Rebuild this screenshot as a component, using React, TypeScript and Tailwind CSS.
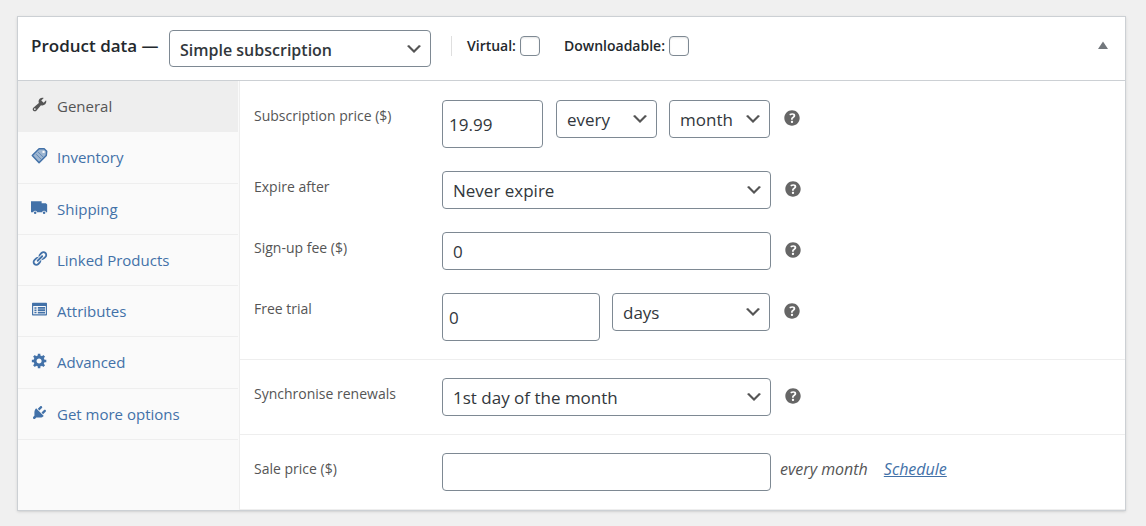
import React, { ReactNode } from "react";

const LABEL = "w-[188px] shrink-0 pt-[6px] text-sm leading-5 text-[#555]";
const FIELD = "rounded border border-[#7e8993] bg-white leading-6 text-[#32373c]";

function Glyph({ d, size }: { d: string; size: string }) {
  return (
    <svg viewBox="0 0 20 20" className={size} fill="currentColor" fillRule="evenodd" aria-hidden="true">
      <path d={d} />
    </svg>
  );
}

const WRENCH =
  "M16.68 9.77c-1.34 1.34-3.3 1.67-4.95.99l-5.41 6.52c-.99.99-2.59.99-3.58 0s-.99-2.59 0-3.57l6.52-5.42c-.68-1.65-.35-3.61.99-4.95 1.28-1.28 3.12-1.62 4.72-1.06l-2.89 2.89 2.82 2.82 2.86-2.87c.53 1.58.18 3.39-1.08 4.65zM3.81 16.21c.4.39 1.04.39 1.43 0 .4-.4.4-1.04 0-1.43-.39-.4-1.03-.4-1.43 0-.39.39-.39 1.03 0 1.43z";
const TRUCK =
  "M0 2.500h12.500v2.500h5l1.500 1.500v9h-1.300a2.400 2.400 0 0 0-4.600 0H7.200a2.400 2.400 0 0 0-4.600 0H0zM4.900 14.700a1.500 1.500 0 1 1 0 3a1.500 1.500 0 0 1 0-3zM15.400 14.700a1.500 1.500 0 1 1 0 3a1.500 1.500 0 0 1 0-3z";
const LINK =
  "M17.74 2.76c1.68 1.69 1.68 4.41 0 6.1l-1.53 1.52c-1.12 1.12-2.7 1.47-4.14 1.09l2.62-2.61.76-.77.76-.76c.84-.84.84-2.2 0-3.04-.84-.85-2.2-.85-3.04 0l-.77.76-3.38 3.38c-.37-1.44-.02-3.02 1.1-4.14l1.52-1.53c1.69-1.68 4.42-1.68 6.1 0zM8.59 13.43l5.34-5.34c.42-.42.42-1.1 0-1.52-.44-.43-1.13-.39-1.53 0l-5.33 5.34c-.42.42-.42 1.1 0 1.52.44.43 1.13.39 1.52 0zm-.76 2.29l4.14-4.15c.38 1.44.03 3.02-1.09 4.14l-1.52 1.53c-1.69 1.68-4.41 1.68-6.1 0-1.68-1.68-1.68-4.42 0-6.1l1.53-1.52c1.12-1.12 2.7-1.47 4.14-1.1l-4.14 4.15c-.85.84-.85 2.2 0 3.05.84.84 2.2.84 3.04 0z";
const LIST =
  "M2 2h16c.5 0 .8.3.8.8v13.400c0 .5-.3.8-.8.8H2c-.5 0-.8-.3-.8-.8V2.800c0-.5.3-.8.8-.8zM2.600 6v9.600h14.800V6zM4 7.300h2.500v1.800H4zM8 7.100h8.500v2.100H8zM4 10h2.500v1.800H4zM8 9.800h8.500v2.100H8zM4 12.700h2.500v1.800H4zM8 12.500h8.500v2.100H8z";
const GEAR =
  "M18 12h-2.18c-.17.7-.44 1.35-.81 1.93l1.54 1.54-2.1 2.1-1.54-1.54c-.58.36-1.23.63-1.91.79V19H8v-2.18c-.68-.16-1.33-.43-1.91-.79l-1.54 1.54-2.12-2.12 1.54-1.54c-.36-.58-.63-1.23-.79-1.91H1V9.03h2.17c.16-.7.44-1.35.8-1.94L2.43 5.55l2.1-2.1 1.54 1.54c.58-.37 1.24-.64 1.93-.81V2h3v2.18c.68.16 1.33.43 1.91.79l1.54-1.54 2.12 2.12-1.54 1.54c.36.59.64 1.24.8 1.94H18V12zm-8.5 1.5c1.66 0 3-1.34 3-3s-1.34-3-3-3-3 1.34-3 3 1.34 3 3 3z";
const PLUG =
  "M13.11 4.36L9.87 7.6 8 5.73l3.24-3.24c.35-.34 1.05-.2 1.56.32.52.51.66 1.21.31 1.55zm-8 1.77l.91-1.12 9.01 9.01-1.19.84c-.71.71-2.63 1.16-3.82 1.16H6.14L4.9 17.26c-.59.59-1.54.59-2.12 0-.59-.58-.59-1.53 0-2.12l1.24-1.24v-3.88c0-1.13.4-3.19 1.09-3.89zm7.26 3.97l3.24-3.24c.34-.35 1.04-.21 1.55.31.52.51.66 1.21.31 1.55l-3.24 3.25z";
const HELP =
  "M17 10c0-3.87-3.14-7-7-7-3.87 0-7 3.13-7 7s3.13 7 7 7c3.86 0 7-3.13 7-7zm-6.3 1.48H9.14v-.43c0-.38.08-.7.24-.98s.46-.57.88-.89c.41-.29.68-.53.81-.71.14-.18.2-.39.2-.62 0-.25-.09-.44-.28-.58-.19-.13-.45-.19-.79-.19-.58 0-1.25.19-2 .57l-.64-1.28c.87-.49 1.8-.74 2.77-.74.81 0 1.45.2 1.92.58.48.39.71.91.71 1.55 0 .43-.09.8-.29 1.11-.19.32-.57.67-1.11 1.06-.38.28-.61.49-.71.63-.1.15-.15.34-.15.57v.35zm-1.47 2.74c-.18-.17-.27-.42-.27-.73 0-.33.08-.58.26-.75s.43-.25.77-.25c.32 0 .57.09.75.26s.27.42.27.74c0 .3-.09.55-.27.72-.18.18-.43.27-.75.27-.33 0-.58-.09-.76-.26z";

function TagIcon() {
  return (
    <svg viewBox="0 0 20 20" className="size-[17px]" fill="none" stroke="currentColor" aria-hidden="true">
      <path d="M1.500 10L9.500 2H15.500L18.500 5L18 10L9.500 18.500Z" strokeWidth="1.700" strokeLinejoin="round" fill="currentColor" fillOpacity="0.5" />
      <path d="M13.500 4.500h2.500v2.500h-2.500z" fill="#fafafa" stroke="none" />
      <path d="M6 8.500l6 6M8.500 6l6 6" strokeWidth="0.800" />
    </svg>
  );
}

const TABS: { name: string; icon: ReactNode; active?: boolean }[] = [
  { name: "General", icon: <Glyph d={WRENCH} size="size-[17px]" />, active: true },
  { name: "Inventory", icon: <TagIcon /> },
  { name: "Shipping", icon: <Glyph d={TRUCK} size="size-[17px]" /> },
  { name: "Linked Products", icon: <Glyph d={LINK} size="size-[17px]" /> },
  { name: "Attributes", icon: <Glyph d={LIST} size="size-[17px]" /> },
  { name: "Advanced", icon: <Glyph d={GEAR} size="size-[17px]" /> },
  { name: "Get more options", icon: <Glyph d={PLUG} size="size-[17px]" /> },
];

function Select({
  id,
  label,
  width,
  options,
  strong,
}: {
  id: string;
  label?: string;
  width: string;
  options: string[];
  strong?: boolean;
}) {
  return (
    <div className={`grid shrink-0 items-center ${width} ${strong ? "h-[37px]" : "h-[38px]"}`}>
      <select
        id={id}
        aria-label={label}
        className={`${FIELD} col-start-1 row-start-1 h-full w-full appearance-none pt-[2px] pr-7 pl-[10px] ${
          strong ? "text-base font-semibold" : "text-[17px]"
        }`}
      >
        {options.map((o) => (
          <option key={o}>{o}</option>
        ))}
      </select>
      <svg
        viewBox="0 0 20 20"
        className="pointer-events-none col-start-1 row-start-1 mr-[7px] size-5 justify-self-end"
        fill="#555"
        aria-hidden="true"
      >
        <path d="M5 6l5 5 5-5 2 1-7 7-7-7 2-1z" />
      </svg>
    </div>
  );
}

function Help() {
  return (
    <button type="button" aria-label="Help" className="ml-[11px] mt-[7px] shrink-0 text-[#666]">
      <Glyph d={HELP} size="size-[22px]" />
    </button>
  );
}

function Check({ label, className }: { label: string; className: string }) {
  return (
    <label className={`flex items-center gap-1 pb-[5px] text-sm font-semibold ${className}`}>
      {label}
      <input
        type="checkbox"
        className="size-5 appearance-none rounded border border-[#7e8993] bg-white shadow-[inset_0_1px_2px_rgba(0,0,0,0.1)]"
      />
    </label>
  );
}

function Row({ id, label, children }: { id: string; label: string; children: ReactNode }) {
  return (
    <div className="flex items-start">
      <label htmlFor={id} className={LABEL}>
        {label}
      </label>
      {children}
    </div>
  );
}

export default function App() {
  return (
    <div className="min-h-screen bg-[#f0f0f0] py-4 pr-5 pl-[17px] font-['Open_Sans','Noto_Sans',sans-serif]">
      <section className="border border-[#ccd0d4] bg-white shadow-sm">
        <header className="flex h-16 items-center border-b border-[#ccd0d4] pl-[13px] pr-4 text-[#23282d]">
          <h2 className="w-[138px] shrink-0 pb-[5px] text-[17px] font-semibold leading-6">Product data —</h2>
          <Select
            id="type"
            label="Product type"
            width="w-[262px]"
            options={["Simple subscription", "Simple product", "Variable subscription"]}
            strong
          />
          <div className="ml-5 pb-[5px]">
            <div className="h-5 w-px bg-[#dfdfdf]" />
          </div>
          <Check label="Virtual:" className="ml-[15px]" />
          <Check label="Downloadable:" className="ml-6" />
          <button type="button" aria-label="Toggle panel" className="ml-auto px-px pb-[7px] text-[#72777c]">
            <svg viewBox="0 0 10 8" className="h-2 w-[10px]" fill="currentColor" aria-hidden="true">
              <path d="M5 0.500L10 8H0z" />
            </svg>
          </button>
        </header>

        <div className="flex">
          <nav className="w-[222px] shrink-0 border-r border-[#eee] bg-[#fafafa] pr-px">
            <ul className="grid h-[359px] auto-rows-fr">
              {TABS.map((t) => (
                <li key={t.name}>
                  <a
                    href={`#${t.name.toLowerCase().replace(/ /g, "-")}`}
                    className={`flex h-full gap-[9px] border-b border-[#eee] pt-[15px] pl-[13px] text-[15px] leading-5 ${
                      t.active ? "bg-[#eee] text-[#555]" : "text-[#4271a8]"
                    }`}
                  >
                    {t.icon}
                    {t.name}
                  </a>
                </li>
              ))}
            </ul>
          </nav>

          <form className="min-w-0 grow">
            <div className="flex flex-col gap-[23px] border-b border-[#eee] pt-[19px] pb-[18px] pl-[14px]">
              <Row id="price" label="Subscription price ($)">
                <input id="price" defaultValue="19.99" className={`${FIELD} h-12 w-[101px] px-[6px] text-[17px]`} />
                <div className="ml-[13px] flex gap-3">
                  <Select id="interval" label="Billing interval" width="w-[101px]" options={["every", "every 2nd"]} />
                  <Select id="period" label="Billing period" width="w-[101px]" options={["month", "week", "year"]} />
                </div>
                <Help />
              </Row>
              <Row id="expire" label="Expire after">
                <Select id="expire" width="w-[329px]" options={["Never expire", "1 month"]} />
                <Help />
              </Row>
              <Row id="fee" label="Sign-up fee ($)">
                <input id="fee" defaultValue="0" className={`${FIELD} h-[38px] w-[329px] px-[10px] text-[17px]`} />
                <Help />
              </Row>
              <Row id="trial" label="Free trial">
                <input id="trial" defaultValue="0" className={`${FIELD} h-12 w-[158px] px-[6px] text-[17px]`} />
                <div className="ml-3 flex">
                  <Select id="trial-unit" label="Free trial period" width="w-[158px]" options={["days", "weeks"]} />
                </div>
                <Help />
              </Row>
            </div>
            <div className="border-b border-[#eee] py-[18px] pl-[14px]">
              <Row id="sync" label="Synchronise renewals">
                <Select id="sync" width="w-[329px]" options={["1st day of the month", "Do not synchronise"]} />
                <Help />
              </Row>
            </div>
            <div className="border-b border-[#eee] py-[18px] pl-[14px]">
              <Row id="sale" label="Sale price ($)">
                <input id="sale" className={`${FIELD} h-[38px] w-[329px] px-[10px] text-[17px]`} />
                <span className="ml-[9px] flex gap-4 pt-1 text-base italic leading-6 text-[#555]">
                  every month
                  <a href="#schedule" className="text-[#4271a8] underline">
                    Schedule
                  </a>
                </span>
              </Row>
            </div>
          </form>
        </div>
      </section>
    </div>
  );
}
